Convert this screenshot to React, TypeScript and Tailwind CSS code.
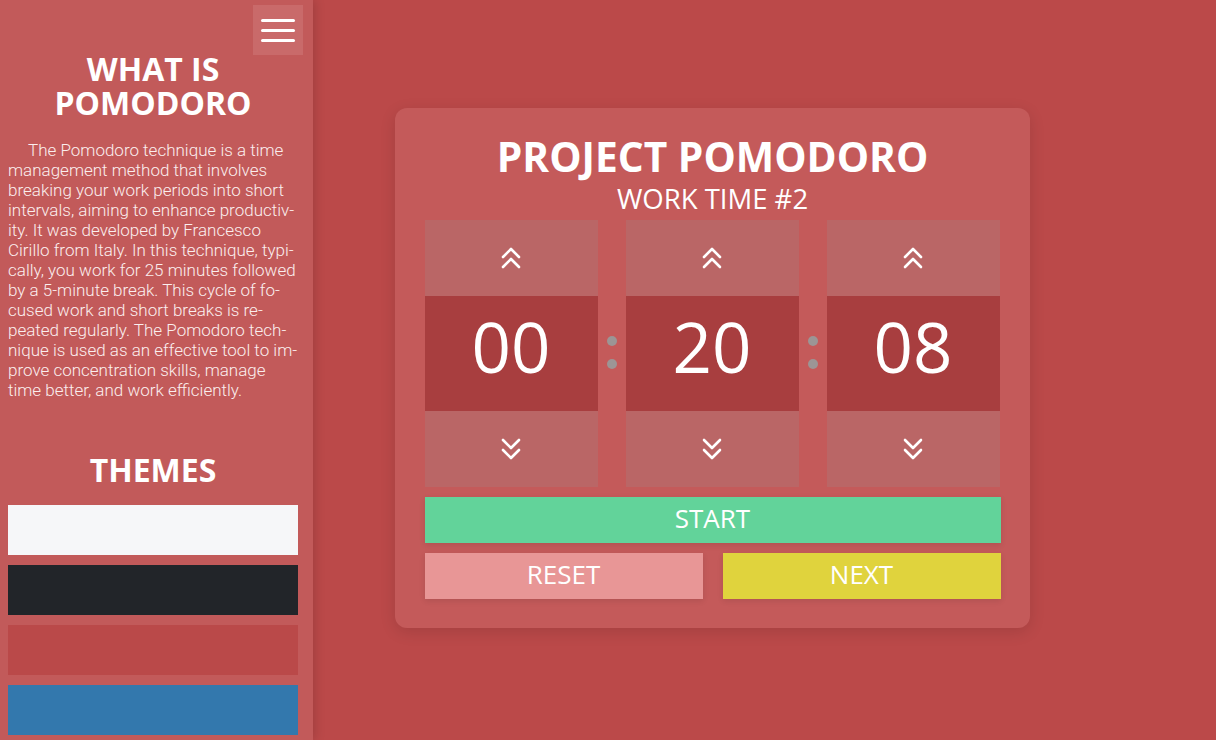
import React from "react";

const ChevronsUp = () => (
  <svg width="22" height="24" viewBox="0 0 22 24" fill="none" stroke="white" strokeWidth="2.6" strokeLinecap="round" strokeLinejoin="round">
    <polyline points="3,11 11,3 19,11" />
    <polyline points="3,21 11,13 19,21" />
  </svg>
);

const ChevronsDown = () => (
  <svg width="22" height="24" viewBox="0 0 22 24" fill="none" stroke="white" strokeWidth="2.6" strokeLinecap="round" strokeLinejoin="round">
    <polyline points="3,3 11,11 19,3" />
    <polyline points="3,13 11,21 19,13" />
  </svg>
);

const Column = ({ value }: { value: string }) => (
  <div className="flex w-[173px] flex-col">
    <button className="flex h-[76px] items-center justify-center bg-[#ba6666]">
      <ChevronsUp />
    </button>
    <div className="flex h-[115px] items-center justify-center bg-[#a83e3f] pb-[14px] text-[69px] leading-none text-white">
      {value}
    </div>
    <button className="flex h-[76px] items-center justify-center bg-[#ba6666]">
      <ChevronsDown />
    </button>
  </div>
);

const Colon = () => (
  <div className="flex w-[28px] flex-col items-center justify-center gap-[13px] pb-[2px]">
    <div className="h-[10px] w-[10px] rounded-full bg-[#9c9595]" />
    <div className="h-[10px] w-[10px] rounded-full bg-[#9c9595]" />
  </div>
);

export default function App() {
  return (
    <div
      className="flex h-[740px] w-[1216px] overflow-hidden bg-[#bb4949] text-white"
      style={{ fontFamily: '"Open Sans", "Noto Sans", sans-serif' }}
    >
      <aside className="relative z-10 flex h-full w-[313px] shrink-0 flex-col bg-[#c25a5a] px-[8px] shadow-[2px_0_10px_rgba(0,0,0,0.15)]">
        <div className="flex justify-end pr-[2px] pt-[5px]">
          <button className="flex h-[50px] w-[50px] flex-col items-center justify-center gap-[7px] bg-[#c96a6a]">
            <span className="block h-[3px] w-[34px] rounded-full bg-white" />
            <span className="block h-[3px] w-[34px] rounded-full bg-white" />
            <span className="block h-[3px] w-[34px] rounded-full bg-white" />
          </button>
        </div>
        <h2 className="mt-[-3px] w-[290px] text-center text-[32px] font-bold leading-[34px]">
          WHAT IS
          <br />
          POMODORO
        </h2>
        <p
          lang="en"
          className="mt-[20px] w-[290px] indent-[20px] text-[17px] font-light leading-[20px] text-[#fbeeee]"
          style={{ fontFamily: 'Roboto, "Liberation Sans", sans-serif' }}
        >
          The Pomodoro technique is a time management method that involves breaking your work periods into short intervals, aiming to enhance productiv&shy;ity. It was developed by Francesco Cirillo from Italy. In this technique, typi&shy;cally, you work for 25 minutes followed by a 5-minute break. This cycle of fo&shy;cused work and short breaks is re&shy;peated regularly. The Pomodoro tech&shy;nique is used as an effective tool to im&shy;prove concentration skills, manage time better, and work efficiently.
        </p>
        <h2 className="mt-[53px] w-[290px] text-center text-[32px] font-bold leading-[34px]">THEMES</h2>
        <div className="mt-[18px] flex w-[290px] flex-col gap-[10px]">
          <button className="h-[50px] w-full bg-[#f6f7f9]" />
          <button className="h-[50px] w-full bg-[#222529]" />
          <button className="h-[50px] w-full bg-[#ba4949]" />
          <button className="h-[50px] w-full bg-[#3378ad]" />
        </div>
      </aside>

      <main className="flex flex-1 items-center pl-[82px]">
        <div className="mb-[4px] flex w-[635px] flex-col items-center rounded-[12px] bg-[#c45a5a] px-[30px] pb-[29px] pt-[23px] shadow-[0_4px_16px_rgba(0,0,0,0.12)]">
          <h1 className="text-[40.7px] font-bold leading-[50px]">PROJECT POMODORO</h1>
          <div className="text-[27.5px] leading-[35px]">WORK TIME #2</div>
          <div className="mt-[4px] flex w-[576px]">
            <Column value="00" />
            <Colon />
            <Column value="20" />
            <Colon />
            <Column value="08" />
          </div>
          <button className="mt-[10px] flex h-[46px] w-[576px] items-center justify-center bg-[#62d39a] pb-[4px] text-[26px] shadow-[0_2px_6px_rgba(0,0,0,0.1)]">
            START
          </button>
          <div className="mt-[10px] flex w-[576px] gap-[20px]">
            <button className="flex h-[46px] flex-1 items-center justify-center bg-[#e89696] pb-[4px] text-[26px] shadow-[0_2px_6px_rgba(0,0,0,0.1)]">
              RESET
            </button>
            <button className="flex h-[46px] flex-1 items-center justify-center bg-[#e0d33d] pb-[4px] text-[26px] shadow-[0_2px_6px_rgba(0,0,0,0.1)]">
              NEXT
            </button>
          </div>
        </div>
      </main>
    </div>
  );
}
